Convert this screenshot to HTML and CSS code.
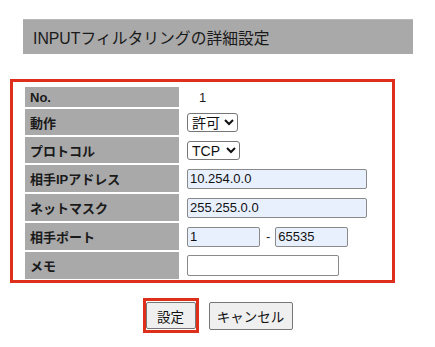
FILE: index.html
```html
<!DOCTYPE html>
<html lang="ja">
<head>
<meta charset="utf-8">
<title>INPUTフィルタリングの詳細設定</title>
<link rel="stylesheet" href="styles.css">
</head>
<body>
<div class="page">
  <h1 class="title">INPUTフィルタリングの詳細設定</h1>
  <div class="highlight">
    <div class="form">
      <div class="label">No.</div>
      <div class="value"><span class="num">1</span></div>
      <div class="label">動作</div>
      <div class="value">
        <select class="sel sel-action"><option>許可</option><option>拒否</option></select>
      </div>
      <div class="label">プロトコル</div>
      <div class="value">
        <select class="sel sel-proto"><option>TCP</option><option>UDP</option></select>
      </div>
      <div class="label">相手IPアドレス</div>
      <div class="value"><input class="field field-wide filled" type="text" value="10.254.0.0"></div>
      <div class="label">ネットマスク</div>
      <div class="value"><input class="field field-wide filled" type="text" value="255.255.0.0"></div>
      <div class="label">相手ポート</div>
      <div class="value">
        <input class="field field-port filled" type="text" value="1">
        <span class="dash">-</span>
        <input class="field field-port filled" type="text" value="65535">
      </div>
      <div class="label">メモ</div>
      <div class="value"><input class="field field-memo" type="text" value=""></div>
    </div>
  </div>
  <div class="actions">
    <span class="btn-mark"><button class="btn btn-ok" type="button">設定</button></span>
    <button class="btn btn-cancel" type="button">キャンセル</button>
  </div>
</div>
</body>
</html>
```

FILE: styles.css
```css
html, body {
  margin: 0;
  padding: 0;
  background: #ffffff;
}

body {
  font-family: "Liberation Sans", "Noto Sans CJK JP", sans-serif;
  color: #1e1e1e;
}

.page {
  width: 435px;
}

.title {
  box-sizing: border-box;
  margin: 19px 0 0 23px;
  width: 390px;
  height: 35px;
  padding-left: 10px;
  background: #a9a9a9;
  border-top: 1px solid #b9b9b9;
  font-size: 15.8px;
  font-weight: normal;
  display: flex;
  align-items: center;
  color: #1a1a1a;
}

.highlight {
  box-sizing: border-box;
  margin: 25px 0 0 10px;
  width: 385px;
  border: 3px solid #dd2f1a;
  padding: 5px 12px 1px 12px;
}

.form {
  display: grid;
  grid-template-columns: 154px 1fr;
  grid-template-rows: 20px 26px 26px 27px 27px 27px 27px;
  gap: 2px;
}

.label {
  background: #a9a9a9;
  font-size: 13px;
  font-weight: bold;
  padding-left: 5px;
  display: flex;
  align-items: center;
  color: #1a1a1a;
}

.value {
  display: flex;
  align-items: center;
  padding-left: 6px;
  font-size: 13px;
}

.num {
  padding-left: 12px;
}

.sel {
  box-sizing: border-box;
  height: 19px;
  font-size: 14px;
  font-family: "Liberation Sans", "Noto Sans CJK JP", sans-serif;
  border: 1px solid #767676;
  border-radius: 3px;
  background: #ffffff;
  color: #111;
  padding: 0;
}

.sel-action {
  width: 51px;
}

.sel-proto {
  width: 53px;
}

.field {
  box-sizing: border-box;
  height: 20px;
  font-size: 13px;
  font-family: "Liberation Sans", "Noto Sans CJK JP", sans-serif;
  color: #111;
  border: 1px solid #8a8a8a;
  border-radius: 2px;
  padding: 0 2px;
  background: #ffffff;
}

.filled {
  background: #e8f0fe;
}

.field-wide {
  width: 180px;
}

.field-port {
  width: 73px;
}

.field-memo {
  width: 152px;
  height: 21px;
}

.dash {
  margin: 0 5px 0 6px;
}

.actions {
  margin-top: 15px;
  display: flex;
  justify-content: center;
  align-items: center;
  gap: 10px;
}

.btn-mark {
  display: flex;
  border: 3px solid #dd2f1a;
  padding: 1px 0;
}

.btn {
  box-sizing: border-box;
  height: 27px;
  font-size: 13.5px;
  font-family: "Noto Sans CJK JP", sans-serif;
  color: #111;
  background: #efefef;
  border: 1px solid #767676;
  border-radius: 2px;
  padding: 0;
  margin: 0;
}

.btn-ok {
  width: 50px;
}

.btn-cancel {
  width: 84px;
  height: 28px;
}
```
